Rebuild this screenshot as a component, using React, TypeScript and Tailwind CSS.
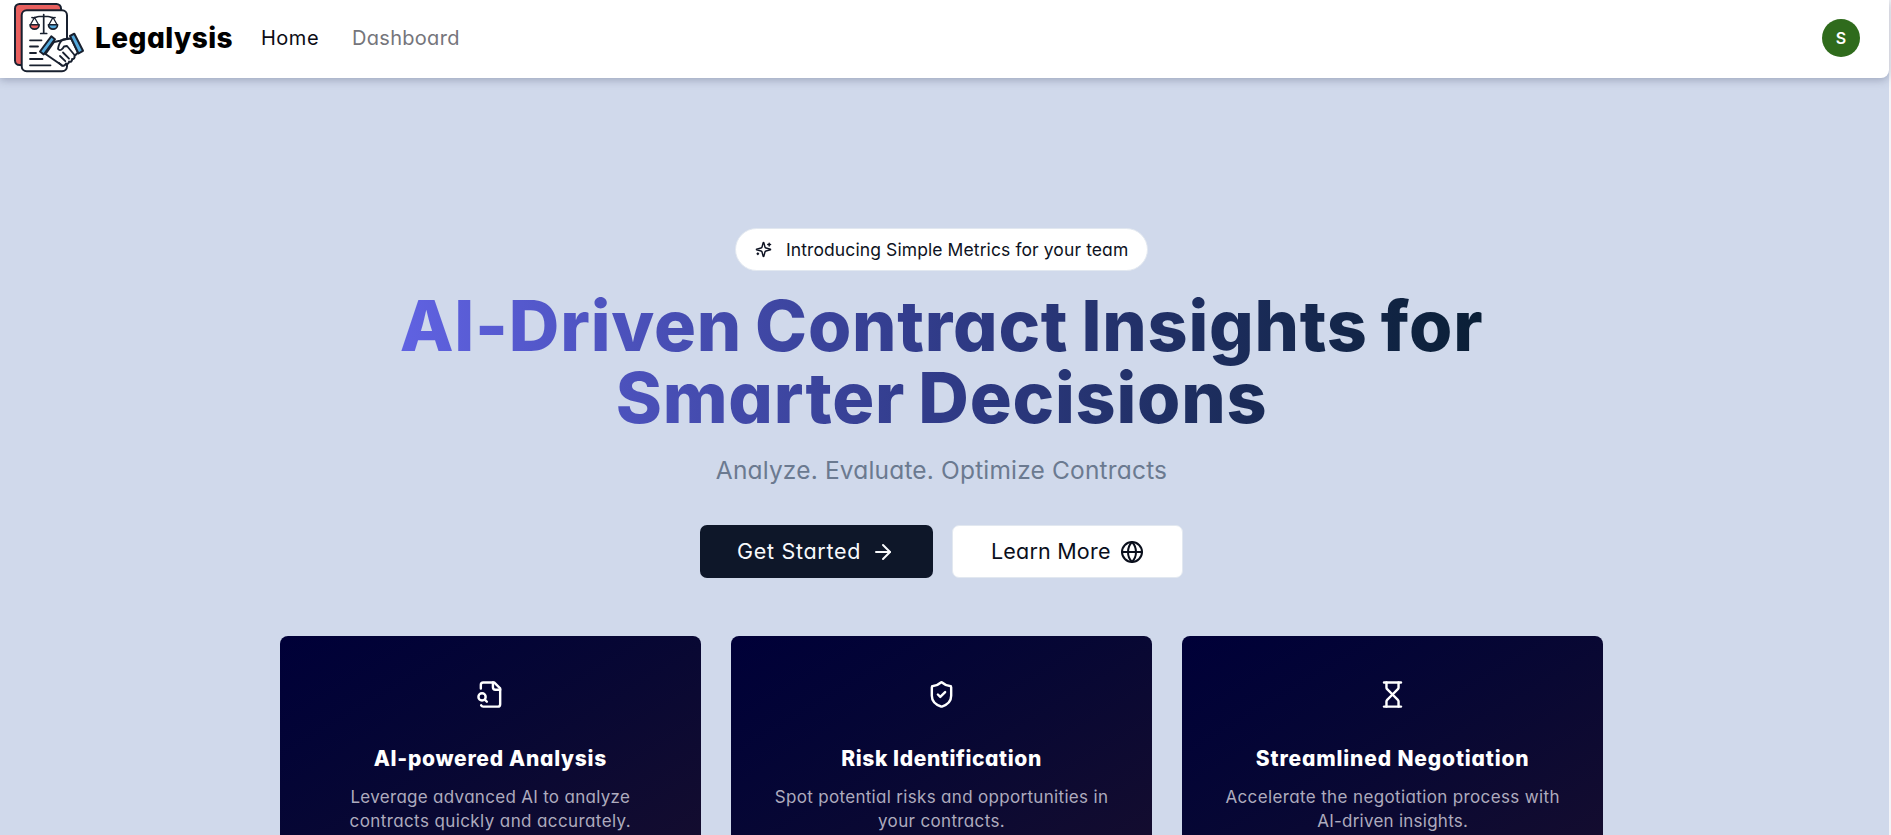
import type { ReactNode } from "react";
import { ArrowRight, Globe, Hourglass, ShieldCheck } from "lucide-react";

function Logo() {
  return (
    <svg width="74" height="74" viewBox="12 1 74 74" fill="none" stroke="#18202f" strokeWidth="2" strokeLinecap="round" strokeLinejoin="round" className="shrink-0">
      <rect x="15" y="4" width="46" height="61" rx="4.5" fill="#e8605f" />
      <rect x="21.7" y="10.3" width="45.3" height="61" rx="5" fill="#fff" />
      <path d="M43.7 14.5v18.5M40.7 33.5h6M32 17.5c3 1 4-1 7-1h9c3 0 4 2 7 1" strokeWidth="1.7" />
      <path d="M34.5 17.5l-4 7M34.5 17.5l4 7M53 17.5l-4 7M53 17.5l4 7" strokeWidth="1.3" />
      <path d="M30 24.7h9.2a4.6 4.4 0 0 1-9.2 0Z" fill="#e8605f" strokeWidth="1.6" />
      <path d="M48.4 24.7h9.2a4.6 4.4 0 0 1-9.2 0Z" fill="#54a9dc" strokeWidth="1.6" />
      <path d="M30 40.3h11.5M30 46.5h8M30 53h6M30 59h12.5M30 65.3h20.5" strokeWidth="1.8" />
      <path d="M54 42l6-1.2 8-2.3 3.5.5 6.5 13.5-3.5 3.5c.5 2-.8 3.4-2.4 3.1.2 2.1-1.3 3.1-3 2.5-.2 1.9-1.7 2.6-3.1 2-.8 2-2.7 2.6-4.2 1.7L52 58.5l-6.5-4.5Z" fill="#fff" />
      <path d="M68 39l-5 .5c-3 2-4.5 6-5 9.5 2 2.3 4.5.5 6-2.5l3-.5 7.5 9M63 52.5l6 6.2M60 56l5.3 5.2M62 65.5l-3-2.5" strokeWidth="1.8" />
      <path d="M51.3 36.3l3.7 2.9-11.3 15.3-3.7-3Z" fill="#54a9dc" />
      <path d="M70 36l4.3-2.3L83 50.8l-4.5 2.7Z" fill="#54a9dc" />
    </svg>
  );
}

function Sparkles() {
  return (
    <svg width="17" height="17" viewBox="0 0 24 24" fill="none" stroke="currentColor" strokeWidth="2" strokeLinecap="round" strokeLinejoin="round">
      <path d="M9.937 15.5A2 2 0 0 0 8.5 14.063l-6.135-1.582a.5.5 0 0 1 0-.962L8.5 9.936A2 2 0 0 0 9.937 8.5l1.582-6.135a.5.5 0 0 1 .963 0L14.063 8.5A2 2 0 0 0 15.5 9.937l6.135 1.581a.5.5 0 0 1 0 .964L15.5 14.063a2 2 0 0 0-1.437 1.437l-1.582 6.135a.5.5 0 0 1-.963 0z" />
      <path d="M20 3v4M22 5h-4M4 17v2M5 18H3" />
    </svg>
  );
}

function FileSearch() {
  return (
    <svg width="29" height="29" viewBox="0 0 24 24" fill="none" stroke="currentColor" strokeWidth="2" strokeLinecap="round" strokeLinejoin="round">
      <path d="M14 2v4a2 2 0 0 0 2 2h4" />
      <path d="M4.268 21a2 2 0 0 0 1.727 1H18a2 2 0 0 0 2-2V7l-5-5H6a2 2 0 0 0-2 2v3" />
      <path d="m9 18-1.5-1.5" />
      <circle cx="5" cy="14" r="3" />
    </svg>
  );
}

function Card({ icon, title, children }: { icon: ReactNode; title: ReactNode; children: ReactNode }) {
  return (
    <article className="flex h-[250px] flex-1 flex-col items-center rounded-lg bg-linear-to-br from-[#000038] to-[#160d2e] pt-11 text-center text-white">
      {icon}
      <h3 className="mt-9 text-[21px] leading-7 font-extrabold">{title}</h3>
      <p className="mt-3 flex flex-col items-center text-[17px] leading-6 text-[#aeabbe]">{children}</p>
    </article>
  );
}

export default function App() {
  return (
    <div className="h-[835px] overflow-hidden bg-[#f3f4f8] pr-0.5 font-[Inter,sans-serif] [font-feature-settings:'cv11'] whitespace-nowrap">
      <div className="h-full bg-[#d0d9eb]">
        <header className="relative flex h-[78px] items-center rounded-br-lg bg-white pr-[29px] pb-0.5 pl-3 shadow-[0_2px_8px_rgba(60,70,100,0.35)]">
          <Logo />
          <span className="ml-[9px] w-[166px] text-[28px] font-extrabold tracking-[0.45px] text-black">Legalysis</span>
          <nav className="flex text-[20px]">
            <a className="w-[91px] tracking-[0.5px] text-[#0b0b14]">Home</a>
            <a className="tracking-[0.3px] text-[#75757b]">Dashboard</a>
          </nav>
          <div className="ml-auto flex size-[38px] items-center justify-center rounded-full bg-[#2f6b1c] text-base font-semibold text-white">S</div>
        </header>

        <main className="flex flex-col items-center pt-[150px] pr-1.5">
          <div className="flex h-[43px] w-[413px] items-center rounded-full border border-slate-200 bg-white pl-[19px] text-[17.5px] tracking-[0.1px] text-[#0d1222]">
            <Sparkles />
            <span className="ml-[14px] pt-px">Introducing Simple Metrics for your team</span>
          </div>
          <h1 className="mt-[19px] bg-linear-to-r from-[#6062e2] via-[#303b88] to-[#0a1f36] bg-clip-text text-center text-[70px] leading-[72px] font-extrabold tracking-[0.78px] text-transparent [word-spacing:-3px]">
            AI-Driven Contract Insights for
            <br />
            Smarter Decisions
          </h1>
          <p className="mt-5 text-[24.5px] leading-8 tracking-[0.17px] text-[#6b7a90]">Analyze. Evaluate. Optimize Contracts</p>
          <div className="mt-[39px] flex w-[483px] justify-between text-[21.5px]">
            <button className="flex h-[53px] w-[233px] items-center rounded-[7px] bg-[#0e1729] pl-[37px] tracking-[0.7px] text-slate-50">
              <span className="w-[134px] text-left">Get Started</span>
              <ArrowRight size={24} />
            </button>
            <button className="flex h-[53px] w-[231px] items-center rounded-[7px] border border-slate-200 bg-white pl-[38px] tracking-[0.2px] text-[#0a0f1c]">
              <span className="w-[129px] text-left">Learn More</span>
              <Globe size={24} />
            </button>
          </div>
          <section className="mt-[58px] flex w-[1323px] gap-[30.5px]">
            <Card icon={<FileSearch />} title={<span className="tracking-[0.72px]">AI-powered Analysis</span>}>
              <span className="tracking-[0.3px]">Leverage advanced AI to analyze</span>
              <span className="tracking-[0.4px]">contracts quickly and accurately.</span>
            </Card>
            <Card icon={<ShieldCheck size={29} />} title={<span className="tracking-[0.6px]">Risk Identification</span>}>
              <span className="tracking-[0.32px]">Spot potential risks and opportunities in</span>
              <span className="tracking-[0.35px]">your contracts.</span>
            </Card>
            <Card icon={<Hourglass size={29} />} title={<span className="tracking-[0.85px]">Streamlined Negotiation</span>}>
              <span className="tracking-[0.37px]">Accelerate the negotiation process with</span>
              <span className="tracking-[0.25px]">AI-driven insights.</span>
            </Card>
          </section>
        </main>
      </div>
    </div>
  );
}
